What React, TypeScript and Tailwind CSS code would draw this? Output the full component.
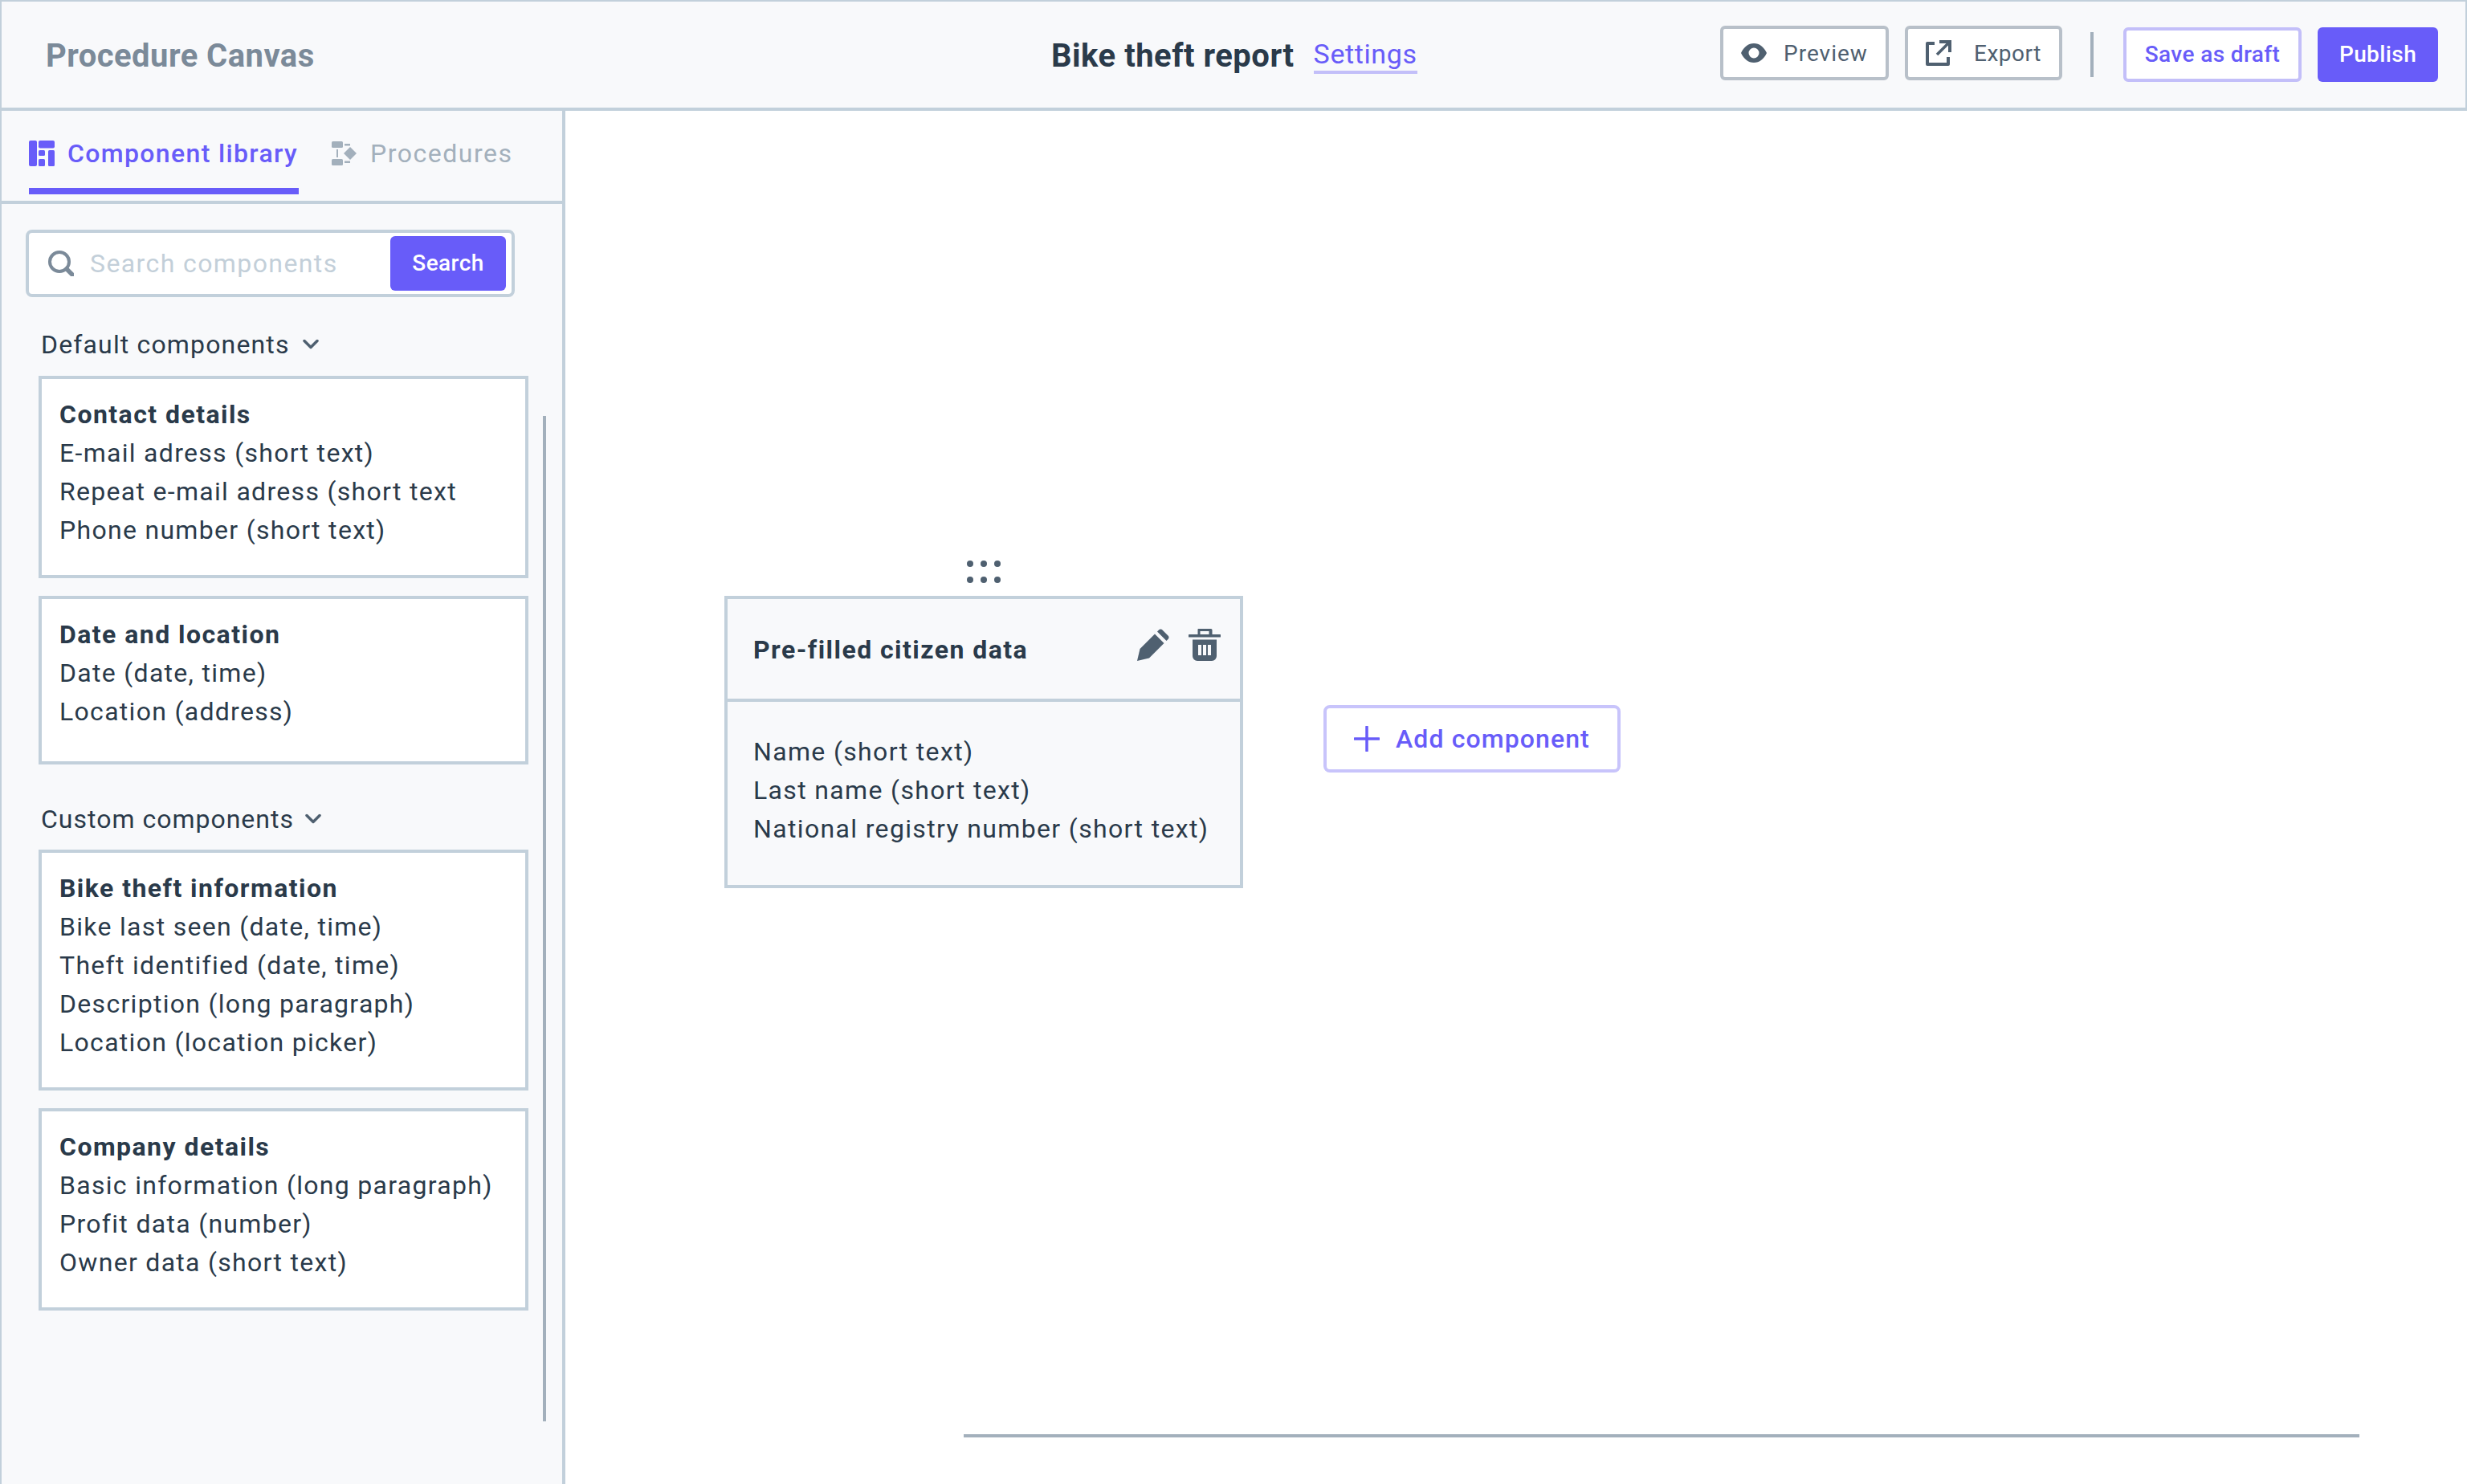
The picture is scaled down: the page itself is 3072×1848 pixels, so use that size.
import React from 'react'

const cards1 = [
  { title: 'Contact details', lines: ['E-mail adress (short text)', 'Repeat e-mail adress (short text', 'Phone number (short text)'], pad: 'pb-[32px]' },
  { title: 'Date and location', lines: ['Date (date, time)', 'Location (address)'], pad: 'pb-[38px]' },
]

const cards2 = [
  { title: 'Bike theft information', lines: ['Bike last seen (date, time)', 'Theft identified (date, time)', 'Description (long paragraph)', 'Location (location picker)'], pad: 'pb-[32px]' },
  { title: 'Company details', lines: ['Basic information (long paragraph)', 'Profit data (number)', 'Owner data (short text)'], pad: 'pb-[32px]' },
]

const Chevron = () => (
  <svg width="20" height="14" viewBox="0 0 20 14" fill="none" stroke="#4f6070" strokeWidth="3.500" strokeLinecap="round" strokeLinejoin="round">
    <path d="M2 2.500l8 8 8-8" />
  </svg>
)

const LibraryCard = ({ title, lines, pad }: { title: string; lines: string[]; pad: string }) => (
  <div className={`w-[610px] border-4 border-[#c2d0db] bg-white pl-[22px] pt-[20px] ${pad} text-[32px] leading-[48px] tracking-[1.3px] text-[#2a3a4a]`}>
    <div className="font-bold tracking-[1.45px]">{title}</div>
    {lines.map((l) => (
      <div key={l} className="whitespace-nowrap">{l}</div>
    ))}
  </div>
)

const App = () => {
  return (
    <div className="w-[3072px] h-[1848px] overflow-hidden bg-white flex flex-col font-['Roboto',sans-serif] text-[#2a3a4a]">
      {/* Top bar */}
      <header className="relative h-[138px] shrink-0 border-t-2 border-l-2 border-r-2 border-b-4 border-[#c2d0db] bg-[#f8f9fb] flex items-center pl-[55px] pr-[34px]">
        <div className="w-[1252px] pt-[3px] text-[40px] font-bold text-[#7b8a99] tracking-[0.45px]">Procedure Canvas</div>
        <div className="pt-[3px] text-[40px] font-bold tracking-[0.5px] text-[#2a3a4a]">Bike theft report</div>
        <a className="ml-[24px] mt-[2px] pt-[1px] border-b-4 border-[#c3bff9] text-[34px] leading-[41px] tracking-[0.6px] text-[#685cf9]">Settings</a>
        <div className="ml-auto flex items-center">
          <button className="mb-[4px] w-[210px] h-[68px] rounded-[6px] border-4 border-[#b8c0c9] bg-white flex items-center pl-[22px] text-[28px] tracking-[1px] text-[#4f6070]">
            <svg width="32" height="24" viewBox="0 0 32 24" fill="#4f6070" fillRule="evenodd">
              <path d="M0 12C3.500 4.500 9 0 16 0s12.500 4.500 16 12c-3.500 7.500-9 12-16 12S3.500 19.500 0 12zm16 6.500a6.500 6.500 0 1 0 0-13 6.500 6.500 0 0 0 0 13z" />
            </svg>
            <span className="ml-[21px] pt-[1px]">Preview</span>
          </button>
          <button className="mb-[4px] ml-[20px] w-[196px] h-[68px] rounded-[6px] border-4 border-[#b8c0c9] bg-white flex items-center pl-[22px] text-[28px] tracking-[0.5px] text-[#4f6070]">
            <svg width="32" height="32" viewBox="0 0 32 32" fill="none" stroke="#4f6070" strokeWidth="4" strokeLinejoin="round">
              <path d="M11 4H2v26h26v-9" />
              <path d="M14 18L28 4" strokeWidth="3.500" />
              <path d="M17 2h13v13" strokeWidth="4" strokeLinejoin="miter" />
            </svg>
            <span className="ml-[28px] pt-[1px]">Export</span>
          </button>
          <div className="ml-[35px] w-[4px] h-[56px] bg-[#a3b0bc]" />
          <button className="ml-[37px] w-[222px] h-[68px] rounded-[6px] border-4 border-[#c3bff9] bg-white text-[28px] font-medium tracking-[0.4px] text-[#685cf9]">Save as draft</button>
          <button className="ml-[20px] w-[150px] h-[68px] rounded-[6px] bg-[#685cf9] text-[28px] font-medium tracking-[0.4px] text-white">Publish</button>
        </div>
      </header>

      <div className="flex flex-1 min-h-0">
        {/* Sidebar */}
        <aside className="relative w-[704px] shrink-0 border-l-2 border-r-4 border-[#c2d0db] bg-[#f8f9fb]">
          <div className="h-[116px] border-b-4 border-[#c2d0db] flex pl-[34px]">
            <div className="w-[336px] h-[104px] border-b-8 border-[#685cf9] flex items-center gap-[16px] pt-[10px] text-[32px] font-medium tracking-[1.35px] text-[#685cf9] whitespace-nowrap">
              <svg width="32" height="32" viewBox="0 0 32 32" fill="#685cf9" className="shrink-0">
                <rect x="0" y="0" width="10" height="32" rx="2" />
                <rect x="12" y="0" width="20" height="9.500" rx="2" />
                <rect x="12" y="12" width="8" height="7" rx="1.500" />
                <rect x="12" y="23" width="8" height="9" rx="1.500" />
                <rect x="24" y="12" width="8" height="20" rx="1.500" />
              </svg>
              Component library
            </div>
            <div className="ml-[41px] h-[104px] flex items-center gap-[17px] pt-[2px] text-[32px] tracking-[1.5px] text-[#a3b0bc] whitespace-nowrap">
              <svg width="31" height="30" viewBox="0 0 31 30" fill="#a3b0bc" className="shrink-0">
                <rect x="0" y="0" width="14" height="8" rx="1.500" />
                <rect x="0" y="22" width="14" height="8" rx="1.500" />
                <rect x="6" y="10" width="2" height="10" />
                <path d="M23 7l8 8-8 8-8-8z" />
                <path d="M16 3h7v2.500h-7zM21 3h2v2h-2zM16 24.500h7V27h-7z" />
              </svg>
              Procedures
            </div>
          </div>

          <div className="pl-[30px] pt-[32px]">
            <div className="w-[609px] h-[84px] rounded-[8px] border-4 border-[#c2d0db] bg-white flex items-center pl-[24px] pr-[7px]">
              <svg width="32" height="32" viewBox="0 0 32 32" fill="none" stroke="#7b8a99" strokeWidth="4" strokeLinecap="round" className="shrink-0">
                <circle cx="14" cy="14" r="12" />
                <path d="M23 23l7 7" strokeWidth="5.500" />
              </svg>
              <span className="ml-[20px] text-[32px] tracking-[1.4px] text-[#c3cfd9] whitespace-nowrap">Search components</span>
              <button className="ml-auto w-[144px] h-[68px] rounded-[6px] bg-[#685cf9] text-[28px] font-medium tracking-[0.4px] text-white">Search</button>
            </div>

            <div className="mt-[35px] ml-[19px] flex items-center gap-[16px] text-[32px] leading-[48px] tracking-[1.15px]">
              Default components <Chevron />
            </div>
            <div className="mt-[15px] ml-[16px] flex flex-col gap-[22px]">
              {cards1.map((c) => (
                <LibraryCard key={c.title} {...c} />
              ))}
            </div>

            <div className="mt-[44px] ml-[19px] flex items-center gap-[14px] text-[32px] leading-[48px] tracking-[1px]">
              Custom components <Chevron />
            </div>
            <div className="mt-[14px] ml-[16px] flex flex-col gap-[22px]">
              {cards2.map((c) => (
                <LibraryCard key={c.title} {...c} />
              ))}
            </div>
          </div>

          {/* scroll thumb */}
          <div className="absolute left-[674px] top-[380px] w-[4px] h-[1252px] bg-[#a3b0bc]" />
        </aside>

        {/* Canvas */}
        <main className="relative flex-1">
          <div className="absolute left-[198px] top-[560px] flex flex-col items-center w-[646px]">
            <div className="grid grid-cols-3 gap-x-[9px] gap-y-[12px] mb-[16px]">
              {[0, 1, 2, 3, 4, 5].map((d) => (
                <span key={d} className="w-[8px] h-[8px] rounded-full bg-[#4f6070]" />
              ))}
            </div>
            <div className="w-full h-[364px] border-4 border-[#c2d0db] bg-[#f8f9fb]">
              <div className="h-[128px] border-b-4 border-[#c2d0db] flex items-center pl-[32px] pr-[24px] text-[32px] font-bold tracking-[1.45px]">
                <span className="mt-[1px]">Pre-filled citizen data</span>
                <svg width="40" height="40" viewBox="0 0 40 40" fill="#4f6070" className="ml-auto mb-[10px]">
                  <path d="M0 40l3.500-15L22 6.500 33.500 18 15 36.500z" />
                  <path d="M25 3.500l2-2a3 3 0 0 1 4.500 0l7 7a3 3 0 0 1 0 4.500l-2 2z" />
                </svg>
                <svg width="40" height="40" viewBox="0 0 40 40" fill="#4f6070" className="ml-[24px] mb-[10px]">
                  <path fillRule="evenodd" d="M12 0h16a1.500 1.500 0 0 1 1.500 1.500V7H39a1.500 1.500 0 0 1 0 3.500H1A1.500 1.500 0 0 1 1 7h10.500V1.500A1.500 1.500 0 0 1 12 0zm2.500 3v4h11V3z" />
                  <path fillRule="evenodd" d="M5 13.500h30V34a6 6 0 0 1-6 6H11a6 6 0 0 1-6-6zM12 20v13h4V20zm6 0v13h4V20zm6 0v13h4V20z" />
                </svg>
              </div>
              <div className="pl-[32px] pt-[38px] text-[32px] leading-[48px] tracking-[1.35px] whitespace-nowrap">
                <div>Name (short text)</div>
                <div>Last name (short text)</div>
                <div>National registry number (short text)</div>
              </div>
            </div>
          </div>

          <button className="absolute left-[944px] top-[740px] w-[370px] h-[84px] rounded-[8px] border-4 border-[#c8c4fb] bg-white flex items-center pl-[34px] text-[32px] font-medium tracking-[1.1px] text-[#685cf9]">
            <svg width="32" height="32" viewBox="0 0 32 32" fill="none" stroke="#685cf9" strokeWidth="3.500" strokeLinecap="round" className="shrink-0">
              <path d="M16 1v30M1 16h30" />
            </svg>
            <span className="ml-[20px]">Add component</span>
          </button>

          <div className="absolute left-[496px] top-[1648px] w-[1738px] h-[4px] bg-[#a3b0bc]" />
        </main>
      </div>
    </div>
  )
}

export default App
